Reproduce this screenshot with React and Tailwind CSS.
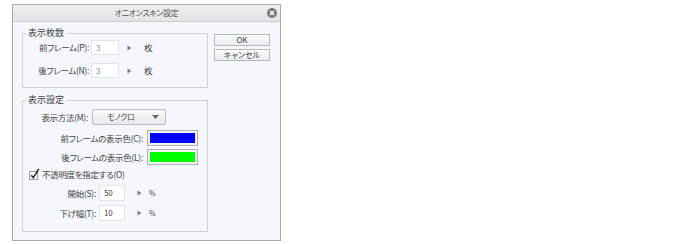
import React from 'react';

const font = "font-['Noto_Sans_CJK_JP','Noto_Sans',sans-serif] [font-feature-settings:'palt']";

const Arrow = () => (
  <svg width="5" height="6" viewBox="0 0 5 6" className="shrink-0">
    <path d="M0.5 0.5 L4.5 3 L0.5 5.5 Z" fill="#808080" />
  </svg>
);

const NumBox = ({ value, w = 'w-[28px]', h = 'h-[15px]', dark }) => (
  <div
    className={`${w} ${h} bg-white border border-[#e1e4e8] flex items-center pl-[4px] text-[8px] leading-none ${
      dark ? 'text-[#444]' : 'text-[#888]'
    }`}
  >
    {value}
  </div>
);

const Swatch = ({ color }) => (
  <div className="w-[51px] h-[16px] border border-[#aeb2b7] bg-[#f2f2f2] p-[2px]">
    <div className={`w-full h-full ${color}`} />
  </div>
);

const Group = ({ title, children, className }) => (
  <fieldset className={`border border-[#d0d4d9] ${className}`}>
    <legend className="ml-[3px] px-[2px] text-[9px] leading-[12px] text-[#444]">{title}</legend>
    {children}
  </fieldset>
);

const Button = ({ children }) => (
  <div className="w-[56px] h-[12px] border border-[#b5b9be] bg-gradient-to-b from-[#fbfbfb] to-[#eaecef] flex items-center justify-center text-[8px] leading-none text-[#444]">
    {children}
  </div>
);

export default function App() {
  return (
    <div className={`w-[695px] h-[244px] bg-white pt-[4px] pl-[12px] ${font}`}>
      <div className="w-[269px] h-[237px] border border-[#a8abaf] bg-[#f4f7fb] flex flex-col">
        <div className="relative h-[17px] bg-gradient-to-b from-[#efefef] to-[#e4e4e4] border-b border-[#cdcdcd] flex items-center justify-center text-[8px] tracking-[-0.3px] text-[#555]">
          オニオンスキン設定
          <div className="absolute right-[3px] top-[3px] w-[10px] h-[10px] rounded-full bg-[#7a7a7a] flex items-center justify-center">
            <svg width="6" height="6" viewBox="0 0 6 6">
              <path d="M1 1 L5 5 M5 1 L1 5" stroke="#fff" strokeWidth="1.4" />
            </svg>
          </div>
        </div>

        <div className="flex pl-[9px] pt-[5px] gap-[6px]">
          <div className="w-[186px] flex flex-col gap-[6px]">
            <Group title="表示枚数" className="pb-[9px]">
              <div className="flex flex-col gap-[8px] pt-[1px]">
                {[
                  ['前フレーム(P):', '3'],
                  ['後フレーム(N):', '3'],
                ].map(([label, v]) => (
                  <div key={label} className="flex items-center h-[15px] text-[8.5px] tracking-[-0.3px] text-[#444]">
                    <span className="w-[66px] text-right">{label}</span>
                    <div className="ml-[2px]">
                      <NumBox value={v} />
                    </div>
                    <div className="ml-[8px]">
                      <Arrow />
                    </div>
                    <span className="ml-[12px]">枚</span>
                  </div>
                ))}
              </div>
            </Group>

            <Group title="表示設定" className="pb-[10px]">
              <div className="flex flex-col text-[8.5px] tracking-[-0.3px] text-[#444]">
                <div className="flex items-center h-[16px] mt-[3px]">
                  <span className="w-[65px] text-right">表示方法(M):</span>
                  <div className="ml-[4px] w-[74px] h-[16px] border border-[#bcc0c5] rounded-[2px] bg-gradient-to-b from-[#fafafa] to-[#e7e9ec] flex items-center pl-[14px] pr-[6px]">
                    <span className="flex-1 text-[8px]">モノクロ</span>
                    <svg width="7" height="4" viewBox="0 0 7 4">
                      <path d="M0 0 L7 0 L3.5 4 Z" fill="#666" />
                    </svg>
                  </div>
                </div>
                <div className="flex items-center h-[16px] mt-[5px]">
                  <span className="w-[120px] text-right">前フレームの表示色(C):</span>
                  <div className="ml-[4px]">
                    <Swatch color="bg-[#0000ff]" />
                  </div>
                </div>
                <div className="flex items-center h-[16px] mt-[3px]">
                  <span className="w-[120px] text-right">後フレームの表示色(L):</span>
                  <div className="ml-[4px]">
                    <Swatch color="bg-[#00ff00]" />
                  </div>
                </div>
                <div className="flex items-center h-[12px] mt-[3px] pl-[6px]">
                  <svg width="12" height="12" viewBox="0 0 12 12" className="shrink-0">
                    <rect x="0.5" y="3.5" width="8" height="8" fill="#fff" stroke="#a0a0a0" />
                    <path d="M2.2 7.2 L4.3 9.6 L9.8 1" fill="none" stroke="#333" strokeWidth="1.6" />
                  </svg>
                  <span className="ml-[1px]">不透明度を指定する(O)</span>
                </div>
                {[
                  ['開始(S):', '50', 'mt-[5px]'],
                  ['下げ幅(T):', '10', 'mt-[4px]'],
                ].map(([label, v, mt]) => (
                  <div key={label} className={`flex items-center h-[16px] ${mt}`}>
                    <span className="w-[73px] text-right">{label}</span>
                    <div className="ml-[3px]">
                      <NumBox value={v} w="w-[26px]" h="h-[16px]" dark />
                    </div>
                    <div className="ml-[12px]">
                      <Arrow />
                    </div>
                    <span className="ml-[7px] text-[7px]">%</span>
                  </div>
                ))}
              </div>
            </Group>
          </div>

          <div className="flex flex-col gap-[3px] pt-[7px]">
            <Button>OK</Button>
            <Button>キャンセル</Button>
          </div>
        </div>
      </div>
    </div>
  );
}
